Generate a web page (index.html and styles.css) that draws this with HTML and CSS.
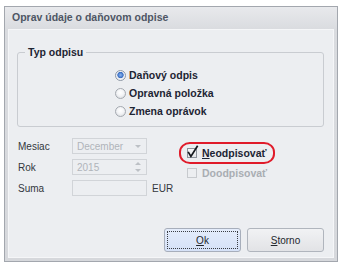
FILE: index.html
```html
<!DOCTYPE html>
<html lang="sk">
<head>
<meta charset="utf-8">
<title>Oprav údaje o daňovom odpise</title>
<link rel="stylesheet" href="styles.css">
</head>
<body>
<div class="window">
  <div class="titlebar">Oprav údaje o daňovom odpise</div>
  <div class="client">
    <fieldset class="group">
      <legend>Typ odpisu</legend>
      <div class="radios">
        <div class="radio-row"><span class="radio checked"></span><span>Daňový odpis</span></div>
        <div class="radio-row"><span class="radio"></span><span>Opravná položka</span></div>
        <div class="radio-row"><span class="radio"></span><span>Zmena oprávok</span></div>
      </div>
    </fieldset>
    <div class="form">
      <div class="fields">
        <span class="lbl">Mesiac</span>
        <div class="input"><span class="val">December</span><span class="drop"></span></div>
        <span></span>
        <span class="lbl">Rok</span>
        <div class="input"><span class="val">2015</span><span class="spin"><span class="up"></span><span class="down"></span></span></div>
        <span></span>
        <span class="lbl">Suma</span>
        <div class="input"></div>
        <span class="unit">EUR</span>
      </div>
      <div class="checks">
        <div class="check-row marked">
          <span class="cbox"><svg width="10" height="10" viewBox="0 0 10 10"><path d="M1.6 4.6 L3.9 8.4 L10.2 -1.6" fill="none" stroke="#15181d" stroke-width="1.7" stroke-linecap="square" stroke-linejoin="miter"/></svg></span>
          <span class="ctext"><u>N</u>eodpisovať</span>
        </div>
        <div class="check-row disabled">
          <span class="cbox"></span>
          <span class="ctext">Doodpisovať</span>
        </div>
      </div>
    </div>
    <div class="buttons">
      <button class="btn ok"><span class="focus"><u>O</u>k</span></button>
      <button class="btn"><span class="focus plain"><u>S</u>torno</span></button>
    </div>
  </div>
</div>
</body>
</html>
```
FILE: styles.css
```css
html, body {
  margin: 0;
  padding: 0;
  background: #ffffff;
}
body {
  font-family: "Liberation Sans", Arial, sans-serif;
  font-size: 10px;
  color: #2d3137;
}
.window {
  margin: 6px 0 0 4px;
  width: 334px;
  height: 256px;
  box-sizing: border-box;
  border: 1px solid #a3a7ae;
  background: linear-gradient(#e8e9ec, #d9dbdf 23px, #d6d8dc);
  padding: 0 3px 3px 3px;
  display: flex;
  flex-direction: column;
}
.titlebar {
  height: 22px;
  line-height: 20px;
  padding-left: 4px;
  font-weight: bold;
  font-size: 10.5px;
  color: #4e5664;
}
.client {
  flex: 1;
  background: #eceef1;
  border: 1px solid #f5f6f8;
  display: flex;
  flex-direction: column;
}
.group {
  margin: 15px 9px 0 8px;
  padding: 7px 0 6px 7px;
  border: 1px solid #c9ccd1;
  border-radius: 3px;
  min-width: 0;
}
.group legend {
  padding: 0 3px;
  font-weight: bold;
  font-size: 10.5px;
  line-height: 14px;
  color: #1d2433;
}
.radios {
  margin-left: 90px;
  display: flex;
  flex-direction: column;
}
.radio-row {
  height: 18px;
  display: flex;
  align-items: center;
  gap: 3px;
  font-weight: bold;
  font-size: 10.5px;
  color: #1d2433;
}
.radio {
  width: 11px;
  height: 11px;
  box-sizing: border-box;
  border-radius: 50%;
  border: 1px solid #a4a9b0;
  background: radial-gradient(circle at 50% 40%, #ffffff 0, #f3f4f6 45%, #d3d6db 100%);
}
.radio.checked {
  border-color: #8e98a6;
  background: radial-gradient(circle at 50% 45%, #8fb6ee 0, #4f83d2 30%, #3a6cc0 42%, #e9edf3 52%, #f6f7f9 75%, #d7dbe1 100%);
}
.form {
  margin-top: 11px;
  padding-left: 9px;
  display: flex;
}
.fields {
  width: 161px;
  display: grid;
  grid-template-columns: 54px 75px 1fr;
  grid-auto-rows: 16px;
  row-gap: 5px;
  align-items: center;
}
.lbl, .unit {
  color: #33373d;
}
.unit {
  padding-left: 5px;
}
.input {
  height: 16px;
  box-sizing: border-box;
  border: 1px solid #d1d4d8;
  background: #eceef1;
  display: flex;
  align-items: center;
  padding-left: 4px;
  color: #b0b4ba;
}
.val {
  flex: 1;
}
.drop {
  width: 0;
  height: 0;
  margin-right: 5px;
  border-left: 3px solid transparent;
  border-right: 3px solid transparent;
  border-top: 3px solid #bcc0c5;
}
.spin {
  display: flex;
  flex-direction: column;
  gap: 4px;
  margin-right: 5px;
}
.spin .up, .spin .down {
  width: 0;
  height: 0;
  border-left: 3px solid transparent;
  border-right: 3px solid transparent;
}
.spin .up { border-bottom: 3px solid #bcc0c5; }
.spin .down { border-top: 3px solid #bcc0c5; }
.checks {
  margin-top: 4px;
  display: flex;
  flex-direction: column;
  gap: 1px;
}
.check-row {
  display: flex;
  align-items: center;
  gap: 5px;
  font-weight: bold;
  font-size: 10.5px;
  height: 16px;
  padding-left: 8px;
}
.check-row.marked {
  width: 96px;
  height: 22px;
  box-sizing: border-box;
  padding-left: 6px;
  border: 2px solid #e01b2a;
  border-radius: 11px / 10px;
  color: #1d2433;
}
.check-row.disabled {
  color: #a9adb3;
}
.cbox {
  width: 10px;
  height: 10px;
  box-sizing: border-box;
  border: 1px solid #8d939b;
  background: linear-gradient(#f6f7f8, #e4e6e9);
  display: block;
}
.cbox svg {
  display: block;
  overflow: visible;
  margin: -1px 0 0 -1px;
}
.disabled .cbox {
  border-color: #c7cace;
  background: #eceef1;
}
.buttons {
  margin-top: auto;
  padding: 0 9px 5px 0;
  display: flex;
  justify-content: flex-end;
  gap: 6px;
}
.btn {
  width: 77px;
  height: 24px;
  box-sizing: border-box;
  border: 1px solid #b0b5bd;
  border-radius: 3px;
  padding: 2px;
  background: linear-gradient(#f1f2f4, #e2e3e6);
  font-family: "Liberation Sans", Arial, sans-serif;
  font-size: 10px;
  color: #23272d;
  display: flex;
}
.btn.ok {
  background: linear-gradient(#e4ecfb, #d5e1f7);
  border-color: #a7aebb;
}
.focus {
  flex: 1;
  display: flex;
  align-items: center;
  justify-content: center;
  border: 1px dotted #3a3d42;
}
.focus.plain {
  border-color: transparent;
}
```
